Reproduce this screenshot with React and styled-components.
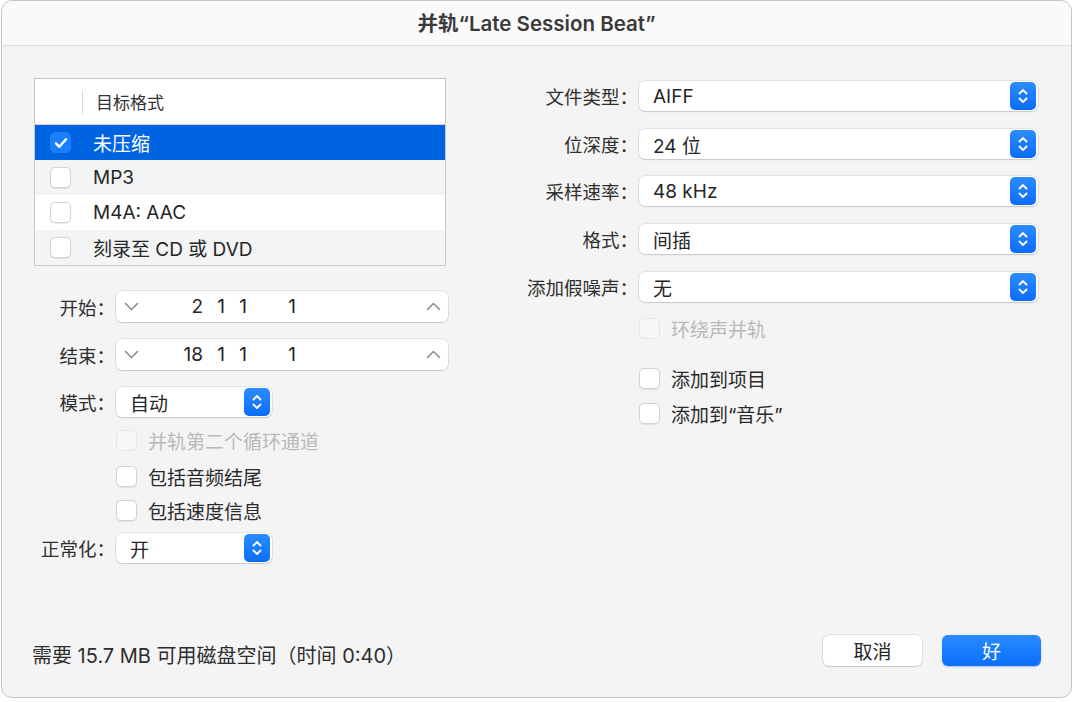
import React from 'react';
import styled, { createGlobalStyle } from 'styled-components';

const GlobalStyle = createGlobalStyle`
  html, body {
    margin: 0;
    padding: 0;
    background: #ffffff;
  }
  body {
    font-family: "Inter", "Noto Sans CJK SC", sans-serif;
    color: #2a2a2a;
  }
  * {
    box-sizing: border-box;
  }
`;

const Window = styled.div`
  width: 1071px;
  height: 698px;
  margin-left: 1px;
  border: 1px solid #c4c4c4;
  border-radius: 11px;
  background: #f4f4f4;
  overflow: hidden;
  display: flex;
  flex-direction: column;
`;

const TitleBar = styled.div`
  height: 45px;
  flex: none;
  background: #fafafa;
  border-bottom: 1px solid #dedede;
  display: flex;
  align-items: center;
  justify-content: center;
  padding-bottom: 2px;
  font-size: 20.5px;
  font-weight: 600;
  color: #3a3a3a;
`;

const Body = styled.div`
  flex: 1;
  display: flex;
  padding: 32px 32px 0 32px;
`;

const LeftColumn = styled.div`
  width: 414px;
  display: flex;
  flex-direction: column;
`;

const RightColumn = styled.div`
  margin-left: 47px;
  flex: 1;
  display: flex;
  flex-direction: column;
`;

const Table = styled.div`
  width: 412px;
  border: 1px solid #c8c8c8;
  background: #ffffff;
`;

const TableHeader = styled.div`
  height: 46px;
  border-bottom: 1px solid #d4d4d4;
  display: flex;
  align-items: center;
  font-size: 17px;
  color: #333;
`;

const HeaderDivider = styled.div`
  width: 1px;
  height: 24px;
  margin-left: 47px;
  margin-right: 13px;
  background: #dcdcdc;
`;

const TableRow = styled.div`
  height: 35px;
  display: flex;
  align-items: center;
  padding-left: 15px;
  font-size: 19px;
  background: ${p => (p.$selected ? '#0064e1' : p.$alt ? '#f3f4f4' : '#ffffff')};
  color: ${p => (p.$selected ? '#ffffff' : '#262626')};
`;

const RowLabel = styled.span`
  margin-left: 22px;
`;

const Box = styled.span`
  width: 21px;
  height: 21px;
  flex: none;
  border-radius: 5px;
  display: flex;
  align-items: center;
  justify-content: center;
  background: ${p => (p.$checked ? '#1a7ffd' : p.$disabled ? '#f7f7f7' : '#ffffff')};
  border: 1px solid ${p => (p.$checked ? '#1a7ffd' : p.$disabled ? '#e6e6e6' : '#d3d3d3')};
  box-shadow: ${p => (p.$disabled ? 'none' : '0 0.5px 1px rgba(0,0,0,0.08)')};
`;

const FormRow = styled.div`
  display: flex;
  align-items: center;
  margin-top: ${p => p.$mt}px;
`;

const Label = styled.span`
  width: ${p => p.$w}px;
  flex: none;
  text-align: right;
  font-size: 18.5px;
  color: #2e2e2e;
  white-space: nowrap;
  margin-right: ${p => p.$gap}px;
`;

const Field = styled.div`
  height: ${p => p.$h}px;
  width: ${p => p.$w}px;
  background: #ffffff;
  border-radius: 6px;
  box-shadow: 0 0 0 0.5px rgba(0, 0, 0, 0.14), 0 1px 1.5px rgba(0, 0, 0, 0.12);
  display: flex;
  align-items: center;
  font-size: 19px;
  color: #262626;
`;

const StepArrow = styled.span`
  width: 30px;
  display: flex;
  justify-content: center;
  flex: none;
`;

const Numbers = styled.div`
  flex: 1;
  display: flex;
`;

const NumCell = styled.span`
  width: ${p => p.$w}px;
  text-align: right;
`;

const PopupText = styled.span`
  flex: 1;
  padding-left: 14px;
`;

const PopupKnob = styled.span`
  width: 26px;
  height: 28px;
  margin-right: 2px;
  border-radius: 5px;
  background: linear-gradient(#2b8cff, #0a6dfa);
  display: flex;
  align-items: center;
  justify-content: center;
  flex: none;
`;

const CheckRow = styled.div`
  display: flex;
  align-items: center;
  height: 21px;
  margin-top: ${p => p.$mt}px;
  margin-left: ${p => p.$indent}px;
  font-size: 19px;
  color: ${p => (p.$disabled ? '#b9b9b9' : '#2a2a2a')};
`;

const CheckText = styled.span`
  margin-left: 11px;
`;

const Footer = styled.div`
  flex: none;
  display: flex;
  align-items: flex-end;
  padding: 0 30px 31px 30px;
`;

const Info = styled.span`
  flex: 1;
  font-size: 20px;
  line-height: 20px;
  color: #2e2e2e;
`;

const Button = styled.button`
  width: 99px;
  height: 31px;
  margin-left: 20px;
  border: none;
  border-radius: 6px;
  font-family: inherit;
  font-size: 19px;
  background: ${p => (p.$primary ? 'linear-gradient(#2a8bff, #0a6ffc)' : '#ffffff')};
  color: ${p => (p.$primary ? '#ffffff' : '#262626')};
  box-shadow: ${p =>
    p.$primary
      ? '0 0.5px 1.5px rgba(0,80,200,0.3)'
      : '0 0 0 0.5px rgba(0,0,0,0.14), 0 1px 1.5px rgba(0,0,0,0.12)'};
`;

const Check = () => (
  <svg width="14" height="12" viewBox="0 0 14 12">
    <path d="M2 6.4 L5.4 9.8 L12 2.2" fill="none" stroke="#fff" strokeWidth="2.4" strokeLinecap="round" strokeLinejoin="round" />
  </svg>
);

const Chevron = ({ up }) => (
  <svg width="15" height="9" viewBox="0 0 15 9">
    <path d={up ? 'M1.5 7.5 L7.5 1.5 L13.5 7.5' : 'M1.5 1.5 L7.5 7.5 L13.5 1.5'} fill="none" stroke="#8c8c8c" strokeWidth="1.6" strokeLinecap="round" strokeLinejoin="round" />
  </svg>
);

const UpDown = () => (
  <svg width="12" height="20" viewBox="0 0 12 20">
    <path d="M2.5 7.5 L6 4 L9.5 7.5 M2.5 12.5 L6 16 L9.5 12.5" fill="none" stroke="#fff" strokeWidth="1.8" strokeLinecap="round" strokeLinejoin="round" />
  </svg>
);

function Checkbox({ checked, disabled }) {
  return (
    <Box $checked={checked} $disabled={disabled}>
      {checked && <Check />}
    </Box>
  );
}

function Popup({ value, width, height = 30 }) {
  return (
    <Field $w={width} $h={height}>
      <PopupText>{value}</PopupText>
      <PopupKnob>
        <UpDown />
      </PopupKnob>
    </Field>
  );
}

function Stepper({ values }) {
  const widths = [57, 22, 22, 49];
  return (
    <Field $w={332} $h={31}>
      <StepArrow>
        <Chevron />
      </StepArrow>
      <Numbers>
        {values.map((v, i) => (
          <NumCell key={i} $w={widths[i]}>{v}</NumCell>
        ))}
      </Numbers>
      <StepArrow>
        <Chevron up />
      </StepArrow>
    </Field>
  );
}

const formats = [
  { name: '未压缩', checked: true },
  { name: 'MP3' },
  { name: 'M4A: AAC' },
  { name: '刻录至 CD 或 DVD' },
];

const rightPopups = [
  { label: '文件类型：', value: 'AIFF', mt: 3 },
  { label: '位深度：', value: '24 位', mt: 18 },
  { label: '采样速率：', value: '48 kHz', mt: 17 },
  { label: '格式：', value: '间插', mt: 18 },
  { label: '添加假噪声：', value: '无', mt: 18 },
];

export default function App() {
  return (
    <>
      <GlobalStyle />
      <Window>
        <TitleBar>并轨“Late Session Beat”</TitleBar>
        <Body>
          <LeftColumn>
            <Table>
              <TableHeader>
                <HeaderDivider />
                目标格式
              </TableHeader>
              {formats.map((f, i) => (
                <TableRow key={f.name} $selected={f.checked} $alt={i % 2 === 1}>
                  <Checkbox checked={f.checked} />
                  <RowLabel>{f.name}</RowLabel>
                </TableRow>
              ))}
            </Table>

            <FormRow $mt={25}>
              <Label $w={81} $gap={1}>开始：</Label>
              <Stepper values={['2', '1', '1', '1']} />
            </FormRow>
            <FormRow $mt={17}>
              <Label $w={81} $gap={1}>结束：</Label>
              <Stepper values={['18', '1', '1', '1']} />
            </FormRow>
            <FormRow $mt={17}>
              <Label $w={81} $gap={1}>模式：</Label>
              <Popup value="自动" width={156} />
            </FormRow>

            <CheckRow $mt={13} $indent={82} $disabled>
              <Checkbox disabled />
              <CheckText>并轨第二个循环通道</CheckText>
            </CheckRow>
            <CheckRow $mt={15} $indent={82}>
              <Checkbox />
              <CheckText>包括音频结尾</CheckText>
            </CheckRow>
            <CheckRow $mt={13} $indent={82}>
              <Checkbox />
              <CheckText>包括速度信息</CheckText>
            </CheckRow>

            <FormRow $mt={12}>
              <Label $w={81} $gap={1}>正常化：</Label>
              <Popup value="开" width={156} />
            </FormRow>
          </LeftColumn>

          <RightColumn>
            {rightPopups.map(r => (
              <FormRow key={r.label} $mt={r.mt}>
                <Label $w={143} $gap={1}>{r.label}</Label>
                <Popup value={r.value} width={399} />
              </FormRow>
            ))}
            <CheckRow $mt={16} $indent={144} $disabled>
              <Checkbox disabled />
              <CheckText>环绕声并轨</CheckText>
            </CheckRow>
            <CheckRow $mt={29} $indent={144}>
              <Checkbox />
              <CheckText>添加到项目</CheckText>
            </CheckRow>
            <CheckRow $mt={14} $indent={144}>
              <Checkbox />
              <CheckText>添加到“音乐”</CheckText>
            </CheckRow>
          </RightColumn>
        </Body>

        <Footer>
          <Info>需要 15.7 MB 可用磁盘空间（时间 0:40）</Info>
          <Button>取消</Button>
          <Button $primary>好</Button>
        </Footer>
      </Window>
    </>
  );
}
